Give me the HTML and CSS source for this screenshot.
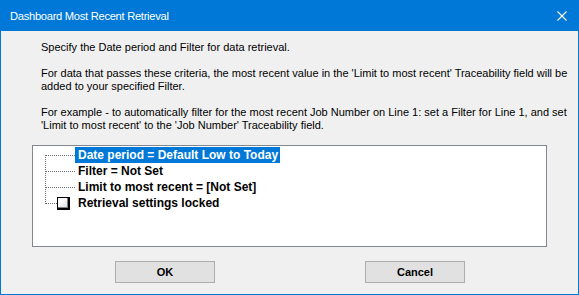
FILE: index.html
```html
<!DOCTYPE html>
<html>
<head>
<meta charset="utf-8">
<title>Dashboard Most Recent Retrieval</title>
<link rel="stylesheet" href="styles.css">
</head>
<body>
<div class="window">
  <div class="titlebar">
    <span class="title">Dashboard Most Recent Retrieval</span>
    <svg class="close" width="10" height="10" viewBox="0 0 10 10"><path d="M0.5 0.5 L9.5 9.5 M9.5 0.5 L0.5 9.5" stroke="#fff" stroke-width="1.1" fill="none"/></svg>
  </div>
  <div class="client">
    <div class="texts">
      <p>Specify the Date period and Filter for data retrieval.</p>
      <p>For data that passes these criteria, the most recent value in the 'Limit to most recent' Traceability field will be<br>added to your specified Filter.</p>
      <p>For example - to automatically filter for the most recent Job Number on Line 1: set a Filter for Line 1, and set<br>'Limit to most recent' to the 'Job Number' Traceability field.</p>
    </div>
    <div class="tree">
      <div class="vline"></div>
      <div class="row"><span class="hline"></span><span class="label selected">Date period = Default Low to Today</span></div>
      <div class="row"><span class="hline"></span><span class="label">Filter = Not Set</span></div>
      <div class="row"><span class="hline"></span><span class="label">Limit to most recent = [Not Set]</span></div>
      <div class="row"><span class="hline short"></span><span class="check"></span><span class="label">Retrieval settings locked</span></div>
    </div>
    <div class="buttons">
      <button class="btn">OK</button>
      <button class="btn">Cancel</button>
    </div>
  </div>
</div>
</body>
</html>
```

FILE: styles.css
```css
html, body {
  margin: 0;
  padding: 0;
  background: #f0f0f0;
}
.window {
  width: 579px;
  height: 295px;
  box-sizing: border-box;
  border: 1px solid #0078d7;
  background: #f0f0f0;
  display: flex;
  flex-direction: column;
}
.titlebar {
  height: 30px;
  background: #0078d7;
  display: flex;
  align-items: center;
  justify-content: space-between;
  padding: 0 11px 0 9px;
  flex-shrink: 0;
}
.title {
  color: #fff;
  font-family: "Liberation Sans", Arial, sans-serif;
  font-size: 11.2px;
  letter-spacing: -0.3px;
  margin-top: -1px;
}
.close {
  display: block;
  margin-top: -1px;
}
.client {
  flex: 1;
  display: flex;
  flex-direction: column;
  padding: 10px 0 0 31px;
  font-family: "Liberation Sans", Arial, sans-serif;
  font-size: 11px;
  color: #000;
}
.texts {
  padding-left: 9px;
}
.texts p {
  margin: 0 0 13px 0;
  line-height: 13px;
  white-space: nowrap;
}
.tree {
  position: relative;
  width: 515px;
  height: 102px;
  box-sizing: border-box;
  border: 1px solid #828790;
  background: #fff;
  padding-top: 1px;
  font-weight: bold;
  font-size: 12px;
}
.vline {
  position: absolute;
  left: 12px;
  top: 9px;
  height: 49px;
  border-left: 1px dotted #707070;
}
.row {
  height: 16px;
  display: flex;
  align-items: center;
  padding-left: 12px;
}
.hline {
  width: 30px;
  border-top: 1px dotted #707070;
  flex-shrink: 0;
}
.hline.short {
  width: 12px;
}
.check {
  width: 13px;
  height: 13px;
  box-sizing: border-box;
  border: 1px solid #000;
  border-right-width: 2px;
  border-bottom-width: 2px;
  box-shadow: inset -1px -1px 0 #808080;
  background: linear-gradient(135deg, #fff 30%, #d8d8d8 100%);
  margin-right: 5px;
  flex-shrink: 0;
}
.label {
  padding: 0 2px 0 3px;
  line-height: 16px;
  white-space: nowrap;
}
.label.selected {
  background: #0078d7;
  color: #fff;
}
.buttons {
  display: flex;
  gap: 150px;
  padding: 14px 0 0 83px;
}
.btn {
  width: 100px;
  height: 22px;
  box-sizing: border-box;
  border: 1px solid #adadad;
  background: #e1e1e1;
  font-family: "Liberation Sans", Arial, sans-serif;
  font-size: 11px;
  font-weight: bold;
  color: #000;
  padding: 0;
  margin: 0;
}
```
